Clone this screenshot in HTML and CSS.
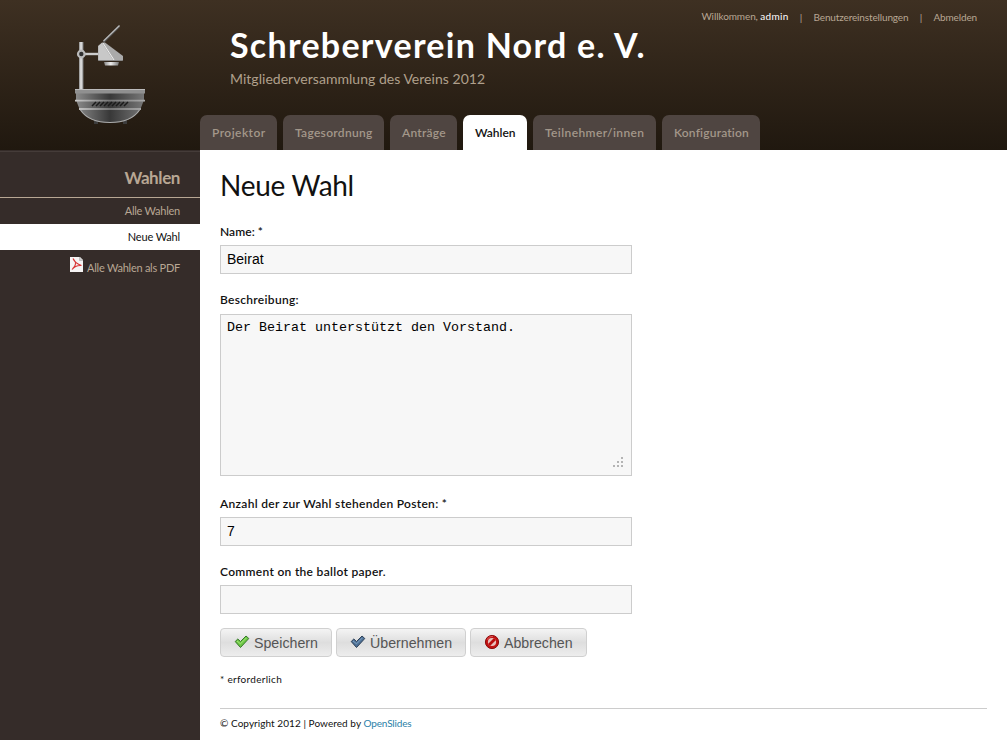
FILE: index.html
```html
<!DOCTYPE html>
<html lang="de">
<head>
<meta charset="utf-8">
<title>Neue Wahl</title>
<link rel="stylesheet" href="styles.css">
</head>
<body>
<header class="header">
  <div class="logo">
    <svg width="100" height="120" viewBox="0 0 100 120" aria-hidden="true">
      <defs>
        <linearGradient id="metal"><stop offset="0" stop-color="#888"/><stop offset=".45" stop-color="#eee"/><stop offset="1" stop-color="#777"/></linearGradient>
        <linearGradient id="rim"><stop offset="0" stop-color="#ccc"/><stop offset=".5" stop-color="#777"/><stop offset="1" stop-color="#aaa"/></linearGradient>
        <linearGradient id="bowl"><stop offset="0" stop-color="#8a8a8a"/><stop offset=".5" stop-color="#383838"/><stop offset="1" stop-color="#777"/></linearGradient>
      </defs>
      <path d="M43.500 27L59.500 11" stroke="#555" stroke-width="2"/>
      <path d="M43.500 26L59.500 10.500" stroke="#bbb" stroke-width="1.200"/>
      <rect x="19" y="27" width="4.500" height="47" fill="url(#metal)"/>
      <rect x="25" y="37.800" width="13" height="2.400" fill="#ccc"/>
      <circle cx="21.300" cy="39" r="3.300" fill="#303030" stroke="#bbb" stroke-width="2.200"/>
      <path d="M38 31L42 27.500H45L63 41V45.500H38Z" fill="#aaa"/>
      <path d="M38.500 31L42 28L53 45H38.500Z" fill="#c8c8c8"/>
      <path d="M43 28L54 45" stroke="#eee"/>
      <path d="M38.500 45.500H62.500" stroke="#888"/>
      <path d="M44 47H59L58 50.500H45Z" fill="url(#metal)"/>
      <rect x="34" y="105" width="4" height="4" fill="#3c3c3c"/>
      <rect x="63" y="105" width="4" height="4" fill="#3c3c3c"/>
      <path d="M16 78H84V85L80.500 94Q72 107.500 50 108Q28 107.500 19.500 94L16 85Z" fill="url(#bowl)"/>
      <path d="M20.500 95Q29 107.500 50 107.500Q71 107.500 79.500 95" fill="none" stroke="#aaa" stroke-width="1.200"/>
      <rect x="15" y="74" width="70" height="4.500" fill="#909090"/>
      <path d="M15 74.500H85" stroke="#bbb"/>
      <path d="M15 84.800H85V86.600H15ZM19 93H81V94.900H19Z" fill="url(#rim)"/>
      <path d="M32 91l4-4M36 91l4-4M40 91l4-4M44 91l4-4M48 91l4-4M52 91l4-4M56 91l4-4M60 91l4-4M64 91l4-4" stroke="#1b1b1b" stroke-width="1.500"/>
    </svg>
  </div>
  <div class="brand">
    <h1 class="title">Schreberverein Nord e. V.</h1>
    <p class="subtitle">Mitgliederversammlung des Vereins 2012</p>
    <nav class="tabs">
      <a class="tab tab-projector">Projektor</a>
      <a class="tab tab-agenda">Tagesordnung</a>
      <a class="tab tab-motions">Anträge</a>
      <a class="tab tab-elections tab-active">Wahlen</a>
      <a class="tab tab-members">Teilnehmer/innen</a>
      <a class="tab tab-config">Konfiguration</a>
    </nav>
  </div>
  <div class="user">
    <span class="welcome">Willkommen, <span class="username">admin</span></span>
    <span class="divider">|</span>
    <a>Benutzereinstellungen</a>
    <span class="divider">|</span>
    <a>Abmelden</a>
  </div>
</header>
<div class="columns">
  <aside class="sidebar">
    <h2 class="side-title">Wahlen</h2>
    <a class="side-link">Alle Wahlen</a>
    <a class="side-link side-active">Neue Wahl</a>
    <a class="side-link side-pdf">
      <svg width="13" height="15" viewBox="0 0 13 15" aria-hidden="true"><path d="M0 0H10L13 3V15H0Z" fill="#f5f3f3"/><path d="M9.500 0V3.500H13" fill="#ccc" stroke="#aaa" stroke-width=".6"/><path d="M3 1.500Q5 6.500 11.500 8.500M11.500 8.500Q5.500 8 2 12.500M3.500 2Q8 7 2.500 12" fill="none" stroke="#d83434" stroke-width="1.100"/></svg>
      <span>Alle Wahlen als PDF</span>
    </a>
  </aside>
  <main class="content">
    <h1 class="page-title">Neue Wahl</h1>
    <form>
      <div class="field">
        <label class="label label-name" for="name">Name: *</label>
        <input class="input" id="name" type="text" value="Beirat">
      </div>
      <div class="field field-area">
        <label class="label" for="description">Beschreibung:</label>
        <div class="area">
          <textarea class="input textarea" id="description">Der Beirat unterstützt den Vorstand.</textarea>
          <svg class="grip" width="10" height="10" viewBox="0 0 10 10" aria-hidden="true"><path d="M8 0h2v2H8zM4 4h2v2H4zM8 4h2v2H8zM0 8h2v2H0zM4 8h2v2H4zM8 8h2v2H8z" fill="#b4b4b4"/></svg>
        </div>
      </div>
      <div class="field">
        <label class="label" for="posts">Anzahl der zur Wahl stehenden Posten: *</label>
        <input class="input" id="posts" type="text" value="7">
      </div>
      <div class="field field-last">
        <label class="label" for="comment">Comment on the ballot paper.</label>
        <input class="input" id="comment" type="text">
      </div>
      <div class="buttons">
        <button class="button button-save" type="button">
          <svg width="16" height="16" viewBox="0 0 16 16" aria-hidden="true"><path d="M1.200 7.500L3.800 5L6.500 7.500L12 2L14.800 4.500L6.500 13.500Z" fill="#6cc644" stroke="#36792a" stroke-linejoin="round"/><path d="M3 7L6.500 9.800L12.500 3.800" fill="none" stroke="#a5e57c"/></svg>
          Speichern
        </button>
        <button class="button button-apply" type="button">
          <svg width="16" height="16" viewBox="0 0 16 16" aria-hidden="true"><path d="M1.200 7.500L3.800 5L6.500 7.500L12 2L14.800 4.500L6.500 13.500Z" fill="#4d7096" stroke="#2e4056" stroke-linejoin="round"/><path d="M3 7L6.500 9.800L12.500 3.800" fill="none" stroke="#7fa1c0"/></svg>
          Übernehmen
        </button>
        <button class="button button-cancel" type="button">
          <svg width="16" height="16" viewBox="0 0 16 16" aria-hidden="true"><circle cx="8" cy="8" r="6.600" fill="#c01212" stroke="#8e0d0d"/><circle cx="8" cy="8" r="4.100" fill="#e8c0bc"/><path d="M5 11L11 5" stroke="#b90d0d" stroke-width="2.800"/><path d="M3 5.500Q5 2.200 9 2.300" fill="none" stroke="#e05a5a"/></svg>
          Abbrechen
        </button>
      </div>
    </form>
    <p class="required">* erforderlich</p>
    <footer class="footer">© Copyright 2012 | Powered by <a class="footer-link">OpenSlides</a></footer>
  </main>
</div>
</body>
</html>
```
FILE: styles.css
```css
* { box-sizing: border-box; }
body {
  margin: 0;
  height: 740px;
  overflow: hidden;
  display: flex;
  flex-direction: column;
  font-family: Lato, "Open Sans", sans-serif;
  color: #111;
  background: #fff;
}
h1, h2, p { margin: 0; }

/* Header */
.header {
  display: flex;
  flex: none;
  height: 150px;
  background: linear-gradient(#3e3022, #20180f);
}
.logo { flex: none; width: 200px; padding: 15px 0 0 60px; }
.brand { flex: none; width: 500px; display: flex; flex-direction: column; white-space: nowrap; }
.title {
  padding: 25px 0 0 30px;
  font-size: 34px;
  line-height: 40px;
  letter-spacing: 1.27px;
  color: #fff;
}
.subtitle {
  padding: 4px 0 0 30px;
  font-size: 14px;
  line-height: 20px;
  letter-spacing: .03px;
  color: #b0a08c;
}
.tabs { display: flex; gap: 6px; margin-top: auto; }
.tab {
  flex: none;
  height: 35px;
  padding-left: 12px;
  font-size: 12px;
  font-weight: 600;
  line-height: 35px;
  color: #a3978a;
  background: #4f4541;
  border-radius: 7px 7px 0 0;
}
.tab-projector { width: 77px; letter-spacing: .45px; }
.tab-agenda { width: 101px; letter-spacing: .3px; }
.tab-motions { width: 67px; letter-spacing: .25px; }
.tab-elections { width: 64px; letter-spacing: 0; }
.tab-members { width: 123px; letter-spacing: .4px; }
.tab-config { width: 98px; letter-spacing: .18px; }
.tab-active { color: #111; background: #fff; }
.user {
  display: flex;
  flex: 1;
  justify-content: flex-end;
  padding: 10px 30px 0 0;
  font-size: 10px;
  line-height: 15px;
  letter-spacing: -.14px;
  white-space: nowrap;
  color: #b8a794;
}
.welcome { margin-top: -1px; letter-spacing: -.1px; }
.username { color: #fff; letter-spacing: .3px; }
.divider { width: 25px; text-align: center; }

/* Sidebar */
.columns { display: flex; flex: 1; }
.sidebar {
  flex: none;
  width: 200px;
  padding-top: 1px;
  background: #352c29;
  color: #b8a794;
}
.side-title {
  height: 47px;
  padding-right: 20px;
  border-top: 1px solid #453c39;
  border-bottom: 1px solid #b8a794;
  font-size: 17px;
  line-height: 51px;
  letter-spacing: -.4px;
  text-align: right;
}
.side-link {
  display: block;
  height: 26px;
  padding-right: 20px;
  font-size: 11px;
  line-height: 26px;
  letter-spacing: -.25px;
  text-align: right;
}
.side-active { background: #fff; color: #111; letter-spacing: -.15px; }
.side-pdf {
  display: flex;
  justify-content: flex-end;
  gap: 4px;
  height: 36px;
  padding-top: 7px;
  line-height: 22px;
}

/* Form */
.content { flex: 1; padding: 15px 20px 0; }
.page-title { font-size: 28px; font-weight: 400; line-height: 40px; letter-spacing: -.28px; }
form { padding-top: 19px; }
.field { height: 68px; }
.field-area { height: 204px; }
.field-area .label { height: 22px; }
.field-last { height: 64px; }
.label {
  display: block;
  height: 21px;
  font-size: 12px;
  font-weight: 600;
  line-height: 15px;
  letter-spacing: .3px;
}
.label-name { letter-spacing: .06px; }
.input {
  display: block;
  width: 412px;
  height: 29px;
  margin: 0;
  padding: 0 6px 1px;
  border: 1px solid #ccc;
  outline: 0;
  font: 14px "Liberation Sans", Arial, sans-serif;
  color: #000;
  background: #f7f7f7;
}
.area { position: relative; width: 412px; }
.textarea {
  height: 162px;
  padding: 5px 6px;
  resize: none;
  font: 13.333px/15px "Liberation Mono", monospace;
}
.grip { position: absolute; right: 9px; bottom: 9px; }
.buttons { display: flex; gap: 4px; }
.button {
  display: flex;
  align-items: center;
  gap: 4px;
  height: 29px;
  padding: 1px 0 0 13px;
  border: 1px solid #d0d0d0;
  border-radius: 4px;
  font: 14.2px "Liberation Sans", Arial, sans-serif;
  color: #555;
  background: linear-gradient(#f4f4f4, #dedede 50%, #ededed);
}
.button svg { flex: none; margin-top: -2px; }
.button-save { width: 112px; }
.button-apply { width: 130px; }
.button-cancel { width: 117px; }

/* Footer */
.required {
  height: 51px;
  padding-top: 15px;
  font-size: 10px;
  line-height: 15px;
  letter-spacing: .3px;
}
.footer {
  padding-top: 7px;
  border-top: 1px solid #ccc;
  font-size: 10px;
  line-height: 15px;
  letter-spacing: .06px;
}
.footer-link { color: #2a7fa8; letter-spacing: -.16px; }
```
